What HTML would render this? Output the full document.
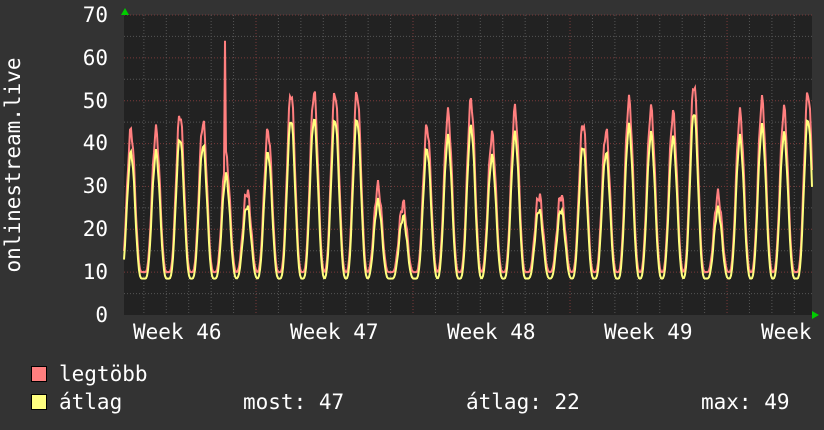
<!DOCTYPE html>
<html><head><meta charset="utf-8"><style>
html,body{margin:0;padding:0;background:#333;}
body{width:824px;height:430px;overflow:hidden;position:relative;font-family:"DejaVu Sans Mono","Liberation Mono",monospace;color:#fff;}
.t{position:absolute;font-size:21px;line-height:21px;white-space:pre;}
.sq{position:absolute;width:14px;height:14px;border:1px solid #000;}
</style></head><body>
<svg id="g" width="824" height="430" style="position:absolute;left:0;top:0">
<rect x="124" y="15" width="688" height="300" fill="#222"/>
<g id="grid"></g>
<path id="mx" fill="none" stroke="#ff7f7f" stroke-width="2"/>
<path id="av" fill="none" stroke="#ffff7f" stroke-width="2"/>
<polygon points="121,15 129,15 125,8" fill="#0c0"/>
<polygon points="812,311 812,319 819,315" fill="#0c0"/>
<g font-family="DejaVu Sans Mono, monospace" font-size="21" fill="#fff" text-anchor="end">
<text x="108" y="22">70</text><text x="108" y="65">60</text><text x="108" y="108">50</text>
<text x="108" y="150">40</text><text x="108" y="193">30</text><text x="108" y="236">20</text>
<text x="108" y="279">10</text><text x="108" y="322">0</text>
</g>
<g font-family="DejaVu Sans Mono, monospace" font-size="21" fill="#fff">
<text x="133" y="339">Week 46</text><text x="290" y="339">Week 47</text>
<text x="447" y="339">Week 48</text><text x="604" y="339">Week 49</text>
<text x="761" y="339">Week</text>
<text transform="translate(20,165) rotate(-90)" text-anchor="middle">onlinestream.live</text>
</g>
</svg>
<div class="sq" style="left:31px;top:366px;background:#ff7f7f"></div>
<div class="sq" style="left:31px;top:394px;background:#ffff7f"></div>
<div class="t" style="left:59px;top:364px">legtöbb</div>
<div class="t" style="left:59px;top:392px">átlag</div>
<div class="t" style="left:243px;top:392px">most: 47</div>
<div class="t" style="left:466px;top:392px">átlag: 22</div>
<div class="t" style="left:701px;top:392px">max: 49</div>
<script>
var ns="http://www.w3.org/2000/svg",g=document.getElementById("grid");
function ln(x1,y1,x2,y2,c){var l=document.createElementNS(ns,"line");l.setAttribute("x1",x1);l.setAttribute("y1",y1);l.setAttribute("x2",x2);l.setAttribute("y2",y2);l.setAttribute("stroke",c);l.setAttribute("stroke-dasharray","1,2");g.appendChild(l);}
function Y(v){return 315-v*300/70;}
for(var v=5;v<=70;v+=5){ln(124,Y(v),812,Y(v),v%10==0?"#7a3a3a":"#555");}
for(var x=256-22.43*5;x<812;x+=22.43){var m=Math.abs((x-256)%157)<2||Math.abs((x-256)%157-157)<2;ln(x,15,x,315,m?"#7a3a3a":"#555");}
var pk=[[131,43],[156,43],[180,47],[203,45],[226,37],[247,29],[268,43],[291,52],[314,52],[335,52],[357,52],[378,30],[403,26],[427,44],[448,47],[471,50],[492,42],[515,48],[539,28],[561,28],[583,45],[606,43],[629,50],[651,48],[673,47],[694,54],[718,28],[740,47],[762,50],[784,48],[808,52]];
var mx="",av="";
for(var x=124;x<=812;x++){
 var best=null,d=1e9;for(var i=0;i<pk.length;i++){var dd=x-pk[i][0];if(Math.abs(dd)<Math.abs(d)){d=dd;best=pk[i];}}
 var p=best[1],ph=d/22.4*2*Math.PI;var f=Math.pow((Math.cos(ph)+1)/2,1.6);
 var jit=Math.sin(x*1.7)*1.5;
 var m=10+(p-10)*f+jit*f; var a=8.5+(p*0.88-8.5)*f+jit*0.6*f;
 if(x==225)m=64;
 mx+=(x==124?"M":"L")+x+","+Y(m).toFixed(1);av+=(x==124?"M":"L")+x+","+Y(a).toFixed(1);
}
document.getElementById("mx").setAttribute("d",mx);document.getElementById("av").setAttribute("d",av);
</script>
</body></html>
